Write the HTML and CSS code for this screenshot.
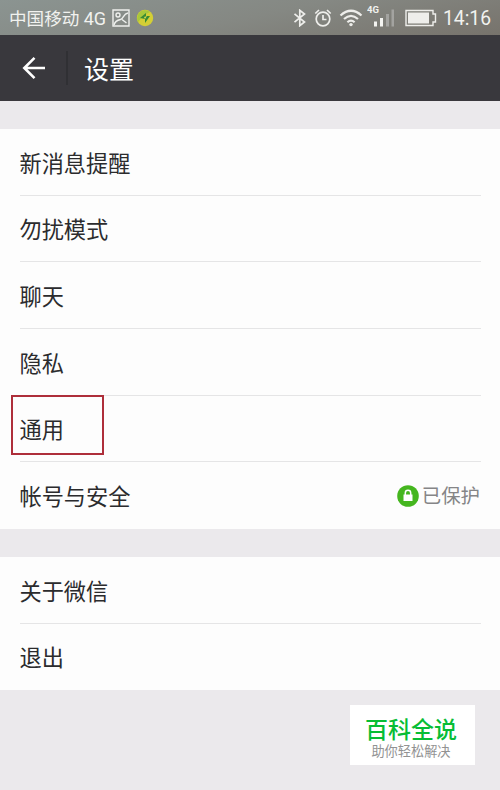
FILE: index.html
```html
<!DOCTYPE html>
<html lang="zh-CN">
<head>
<meta charset="utf-8">
<title>设置</title>
<link rel="stylesheet" href="styles.css">
</head>
<body>
<div class="status">
  <span class="carrier">中国移动 <span class="net">4G</span></span>
  <svg class="picture" width="18" height="18" viewBox="0 0 18 18" fill="none" stroke="#eef0ed" stroke-width="1.4"><path d="M1 1h16v16H1z"/><circle cx="6" cy="6" r="2"/><path d="M2 16C3 12 6 11 8.500 10.500C12 9.500 11 5 16 4M10 10.500l4.500 3.500"/></svg>
  <svg class="ball" width="18" height="18" viewBox="0 0 18 18"><circle cx="9" cy="9" r="8.2" fill="#d4cf35"/><path d="M3 4a8 8 0 0 1 11-1L8 6 2 13Q0 8 3 4" fill="#a8c83c"/><path d="M4 9l6-5v3h4l-5 7v-4z" fill="#398b35"/><path d="M8 8l3-1-2 3z" fill="#dedc4c"/></svg>
  <div class="right">
    <svg class="bt" width="14" height="18" viewBox="0 0 14 18" fill="none" stroke="#eeeeeb" stroke-width="1.7"><path d="M1.5 4.8l10 8.2L6.8 16.7V1.3L11.500 5l-10 8.2"/></svg>
    <svg class="alarm" width="18" height="20" viewBox="0 0 18 20" fill="none" stroke="#eeeeeb" stroke-width="1.7"><circle cx="9" cy="11" r="6.8"/><path d="M9 7v4.500h3.500M1.300 5.500L5 2M16.700 5.500L13 2"/></svg>
    <svg class="wifi" width="24" height="18" viewBox="0 0 24 18" fill="none" stroke="#eeeeeb" stroke-width="2.200"><path d="M1.500 6.500Q12-3 22.500 6.500M5 10Q12 3.600 19 10M8.400 13.200Q12 10 15.600 13.200"/><circle cx="12" cy="15.600" r="1.700" fill="#eeeeeb" stroke="none"/></svg>
    <svg class="signal" width="30" height="22" viewBox="0 0 30 22"><text x="0" y="8" class="tiny">4G</text><path d="M7 16.500h3v5H7zM13 13h3v8.500h-3z" fill="#f4f4f1"/><path d="M19 9h3v12.500h-3zM24.500 4.500h2.500v17h-2.500z" fill="#a3a3a0"/></svg>
    <svg class="battery" width="32" height="18" viewBox="0 0 32 18"><path d="M1 1.500h27v3.500h2.500v8H28v3.500H1z" fill="none" stroke="#eeeeeb" stroke-width="1.400"/><path d="M3 3.500h21v11H3z" fill="#eeeeeb"/></svg>
    <span class="time">14:16</span>
  </div>
</div>
<header class="bar">
  <svg class="back" width="24" height="24" viewBox="0 0 24 24" fill="none" stroke="#fff" stroke-width="2.600"><path d="M23 12H2M12.500 1.800L2.300 12 12.500 22.200"/></svg>
  <i class="divider"></i>
  <h1>设置</h1>
</header>
<main>
  <section class="group first">
    <div class="row">新消息提醒</div>
    <div class="row">勿扰模式</div>
    <div class="row">聊天</div>
    <div class="row">隐私</div>
    <div class="row marked">通用</div>
    <div class="row">帐号与安全
      <span class="safe"><svg width="22" height="22" viewBox="0 0 22 22"><circle cx="11" cy="11" r="10.800" fill="#45b61f"/><path d="M6.500 9.500h9v6.500h-9z" fill="#fff"/><path d="M8.300 10V8a2.700 2.700 0 0 1 5.400 0v2" fill="none" stroke="#fff" stroke-width="1.500"/></svg>已保护</span>
    </div>
  </section>
  <section class="group second">
    <div class="row">关于微信</div>
    <div class="row">退出</div>
  </section>
</main>
<aside class="stamp"><strong>百科全说</strong><span>助你轻松解决</span></aside>
</body>
</html>
```
FILE: styles.css
```css
*, *::before { box-sizing: border-box; }
body {
  margin: 0;
  width: 500px;
  height: 790px;
  overflow: hidden;
  position: relative;
  background: #ebe9ec;
  color: #2b2b2d;
  font-family: Roboto, "Noto Sans CJK SC", sans-serif;
}
.status {
  height: 35px;
  display: flex;
  align-items: center;
  padding: 0 9px;
  color: #f1f2ef;
  background: linear-gradient(168deg, #8b9491 0%, #858883 50%, #77736c 100%);
}
.status svg { flex: none; display: block; }
.carrier { width: 103px; font-size: 17.6px; line-height: 32px; padding-top: 3px; white-space: nowrap; }
.net { font-size: 18px; }
.ball { margin-left: 6px; }
.right { margin-left: auto; display: flex; align-items: center; }
.alarm { margin-left: 7px; }
.wifi { margin-left: 7px; }
.signal { margin: -4px 0 0 4px; }
.battery { margin-left: 8px; }
.time { margin-left: 6px; font-size: 19.3px; line-height: 32px; width: 48px; padding-top: 3px; white-space: nowrap; }
.tiny { font: bold 9.5px Roboto, sans-serif; fill: #f1f2ef; }
.bar {
  height: 66px;
  display: flex;
  align-items: center;
  padding-left: 22px;
  background: #39383d;
  color: #fff;
}
.divider { width: 2px; height: 34px; margin-left: 20px; background: #303034; }
h1 { margin: 0 0 0 16px; padding-top: 5px; font-size: 25px; line-height: 36px; font-weight: 400; }
.group { background: #fdfdfd; padding: 0 19px 0 20px; display: grid; }
.first { margin-top: 28px; height: 400px; grid-template-rows: repeat(6, 1fr); }
.second { margin-top: 28px; height: 133px; grid-template-rows: repeat(2, 1fr); }
.row {
  display: flex;
  align-items: center;
  position: relative;
  padding-top: 4px;
  font-size: 22.2px;
  line-height: 32px;
  text-indent: -0.5px;
  border-bottom: 1px solid #e5e5e6;
}
.row:last-child { border-bottom: 0; padding-top: 3px; }
.marked::before {
  content: "";
  position: absolute;
  left: -9px;
  top: -1px;
  width: 93px;
  height: 60px;
  border: 2px solid #ae2e3a;
}
.safe { margin-left: auto; margin-right: 1px; display: flex; align-items: center; gap: 3px; font-size: 19.4px; color: #858587; }
.safe svg { margin-top: -3px; }
.stamp {
  position: absolute;
  left: 350px;
  top: 705px;
  width: 125px;
  height: 60px;
  background: #fff;
  display: flex;
  flex-direction: column;
  align-items: center;
  padding: 12px 3px 0 0;
}
.stamp strong { font-size: 23px; line-height: 27px; font-weight: 500; color: #07bd35; }
.stamp span { font-size: 13.2px; line-height: 16px; color: #929292; }
```
